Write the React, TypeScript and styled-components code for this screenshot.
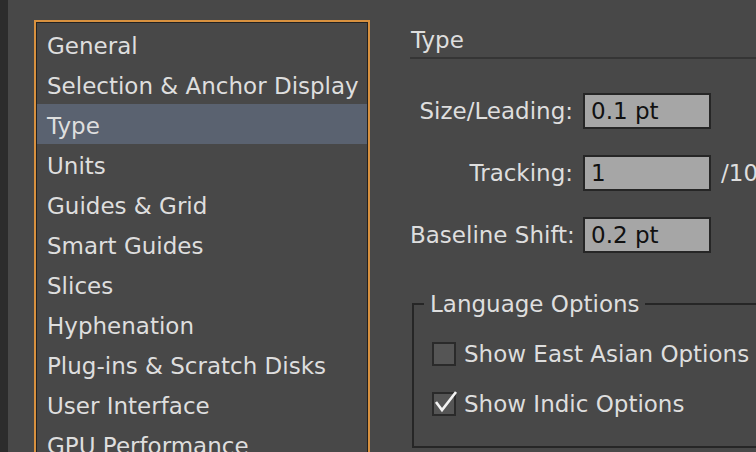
import styled, { createGlobalStyle } from "styled-components";

const GlobalStyle = createGlobalStyle`
    html, body {
        margin: 0;
        padding: 0;
        background-color: #484848;
    }
    body {
        font-family: "DejaVu Sans", "Liberation Sans", sans-serif;
        color: #dedede;
    }
`

const Page = styled.div`
    display: flex;
    width: 756px;
    height: 452px;
    overflow: hidden;
    background-color: #484848;
`

const Edge = styled.div`
    flex: 0 0 8px;
    background-color: #2c2c2c;
`

const ListPanel = styled.ul`
    flex: 0 0 336px;
    box-sizing: border-box;
    height: 460px;
    margin: 20px 0 0 26px;
    padding: 2px 1px 0 1px;
    list-style: none;
    border: 2px solid #d8913f;
    border-bottom: none;
    box-shadow: inset 0 0 0 1px #222222;
`

const ListItem = styled.li<{ $active?: boolean }>`
    height: 36px;
    line-height: 36px;
    padding: 4px 0 0 10px;
    font-size: 23px;
    white-space: nowrap;
    background-color: ${(props) => (props.$active ? "#5a6270" : "transparent")};
`

const Content = styled.div`
    flex: 0 0 auto;
    width: 400px;
    margin-left: 40px;
    padding-top: 20px;
`

const Header = styled.h2`
    margin: 0;
    height: 33px;
    line-height: 33px;
    padding: 4px 0 0 1px;
    font-size: 23px;
    font-weight: normal;
    border-bottom: 2px solid #353535;
`

const Form = styled.div`
    display: grid;
    grid-template-columns: 163px 128px auto;
    column-gap: 10px;
    row-gap: 26px;
    align-items: center;
    margin-top: 34px;
`

const Label = styled.label`
    font-size: 23px;
    text-align: right;
    white-space: nowrap;
`

const Field = styled.div`
    box-sizing: border-box;
    height: 36px;
    line-height: 33px;
    padding-left: 6px;
    font-size: 23px;
    color: #111111;
    background-color: #a6a6a6;
    border: 2px solid #262626;
`

const Unit = styled.span`
    font-size: 23px;
    white-space: nowrap;
`

const Group = styled.fieldset`
    margin: 37px 0 0 2px;
    padding: 16px 0 22px 0;
    border: 2px solid #262626;
    display: flex;
    flex-direction: column;
    gap: 10px;
`

const Legend = styled.legend`
    margin-left: 10px;
    padding: 0 5px 0 6px;
    font-size: 23px;
    line-height: 28px;
`

const CheckRow = styled.label`
    display: flex;
    align-items: center;
    gap: 8px;
    height: 40px;
    padding-left: 18px;
    font-size: 23px;
    white-space: nowrap;
`

const Box = styled.span`
    position: relative;
    box-sizing: border-box;
    flex: 0 0 24px;
    height: 24px;
    background-color: #555555;
    border: 2px solid #2a2a2a;
`

const CheckMark = styled.svg`
    position: absolute;
    left: 0;
    top: -4px;
    width: 26px;
    height: 26px;
    overflow: visible;
`

const Check = ({ checked }: { checked?: boolean }) => (
    <Box>
        {checked ? (
            <CheckMark viewBox="0 0 26 26">
                <path d="M2 12 L8 20 L22 2" fill="none" stroke="#f2f2f2" strokeWidth="2.6" strokeLinejoin="miter" />
            </CheckMark>
        ) : null}
    </Box>
)

const sections = [
    "General",
    "Selection & Anchor Display",
    "Type",
    "Units",
    "Guides & Grid",
    "Smart Guides",
    "Slices",
    "Hyphenation",
    "Plug-ins & Scratch Disks",
    "User Interface",
    "GPU Performance",
]

const App = () => {
    return (
        <Page>
            <GlobalStyle />
            <Edge />
            <ListPanel>
                {sections.map((name) => (
                    <ListItem key={name} $active={name === "Type"}>{name}</ListItem>
                ))}
            </ListPanel>
            <Content>
                <Header>Type</Header>
                <Form>
                    <Label>Size/Leading:</Label>
                    <Field>0.1 pt</Field>
                    <span />
                    <Label>Tracking:</Label>
                    <Field>1</Field>
                    <Unit>/1000 em</Unit>
                    <Label>Baseline Shift:</Label>
                    <Field>0.2 pt</Field>
                    <span />
                </Form>
                <Group>
                    <Legend>Language Options</Legend>
                    <CheckRow><Check />Show East Asian Options</CheckRow>
                    <CheckRow><Check checked />Show Indic Options</CheckRow>
                </Group>
            </Content>
        </Page>
    )
}

export default App;
